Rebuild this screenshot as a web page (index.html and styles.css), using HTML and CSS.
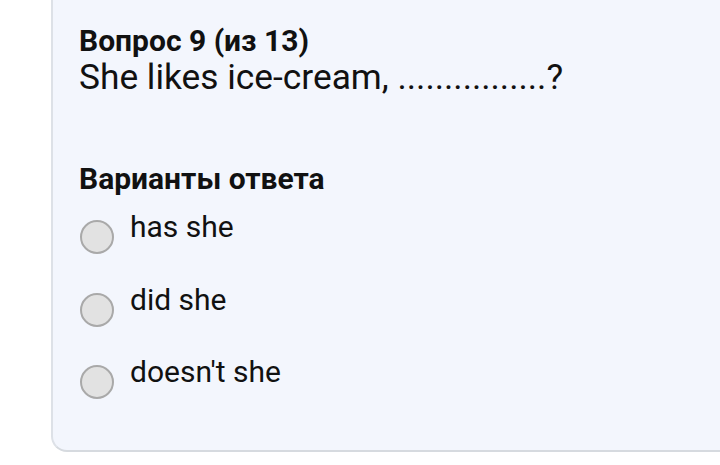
FILE: index.html
```html
<!DOCTYPE html>
<html>
<head>
<meta charset="utf-8">
<link rel="stylesheet" href="styles.css">
</head>
<body>
<div class="card">
  <div class="qnum">Вопрос 9 (из 13)</div>
  <div class="qtext">She likes ice-cream, ................?</div>
  <div class="vlabel">Варианты ответа</div>
  <ul class="options">
    <li class="option"><span class="radio"></span><span class="otext">has she</span></li>
    <li class="option"><span class="radio"></span><span class="otext">did she</span></li>
    <li class="option"><span class="radio"></span><span class="otext">doesn't she</span></li>
  </ul>
</div>
</body>
</html>
```
FILE: styles.css
```css
html, body {
  margin: 0;
  padding: 0;
  background: #ffffff;
}
body {
  font-family: Roboto, "Noto Sans", sans-serif;
  color: #111111;
  width: 720px;
  height: 465px;
  overflow: hidden;
}
.card {
  margin-left: 51px;
  height: 452px;
  box-sizing: border-box;
  background: #f3f6fd;
  border-left: 2px solid #dde1e7;
  border-bottom: 2px solid #d6dadf;
  border-bottom-left-radius: 16px;
  padding: 24px 0 0 26px;
}
.qnum {
  font-weight: 700;
  font-size: 30px;
  line-height: 34px;
}
.qtext {
  font-size: 35.3px;
  line-height: 38px;
}
.vlabel {
  margin-top: 65px;
  font-weight: 700;
  font-size: 30px;
  line-height: 36px;
}
.options {
  list-style: none;
  margin: 12px 0 0 0;
  padding: 0;
}
.option {
  display: flex;
  align-items: flex-start;
  height: 72.5px;
}
.radio {
  width: 34px;
  height: 34px;
  box-sizing: border-box;
  border-radius: 50%;
  background: #e2e2e2;
  border: 2px solid #a9a9a9;
  margin-top: 11px;
  margin-left: 1px;
  flex: none;
}
.otext {
  font-size: 30px;
  line-height: 36px;
  margin-left: 16px;
}
```
